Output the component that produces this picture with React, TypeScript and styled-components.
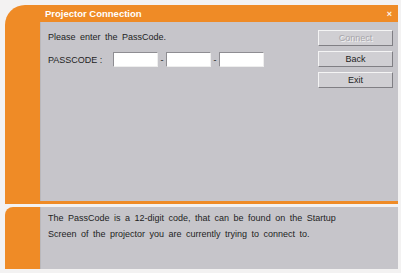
import React from 'react';
import styled, { createGlobalStyle } from 'styled-components';

const ORANGE = '#ef8b26';
const GRAY = '#c6c5ca';

const Global = createGlobalStyle`
    html, body {
        margin: 0;
        padding: 0;
        background: #f3f2f2;
    }
    body {
        font-family: "Liberation Sans", Arial, sans-serif;
        color: #1e1e1e;
    }
`;

const Window = styled.div`
    width: 401px;
    height: 273px;
    box-sizing: border-box;
    padding: 5px 3px 4px 5px;
    display: grid;
    grid-template-rows: 199px 62px;
    row-gap: 3px;
    background: #f3f2f2;
`;

const TopPanel = styled.div`
    display: grid;
    grid-template-columns: 35px 1fr;
    grid-template-rows: 17px 1fr;
    background: ${ORANGE};
    border-top-left-radius: 20px;
    padding-bottom: 3px;
`;

const TitleBar = styled.div`
    grid-column: 2;
    display: flex;
    align-items: center;
    justify-content: space-between;
    padding: 0 6px 0 5px;
    color: #fff;
    font-weight: bold;
    font-size: 9.5px;
`;

const Close = styled.span`
    font-size: 9px;
    font-weight: bold;
    opacity: 0.9;
`;

const Content = styled.div`
    grid-column: 2;
    background: ${GRAY};
    display: grid;
    grid-template-columns: 1fr 75px;
    padding: 8px 5px 0 7px;
    border-left: 1px solid #b9b8bc;
`;

const Form = styled.div`
    display: flex;
    flex-direction: column;
    gap: 8px;
    font-size: 9px;
    word-spacing: 2px;
`;

const Line = styled.div`
    height: 14px;
    line-height: 14px;
`;

const CodeRow = styled.div`
    display: flex;
    align-items: center;
    height: 15px;
    word-spacing: 0;
`;

const Label = styled.span`
    width: 65px;
`;

const Dash = styled.span`
    width: 8px;
    text-align: center;
`;

const CodeInput = styled.input`
    width: 45px;
    height: 15px;
    box-sizing: border-box;
    margin: 0;
    padding: 0 2px;
    background: #fff;
    border: 1px solid;
    border-color: #8e8d92 #eeeeee #eeeeee #8e8d92;
    outline: none;
    font-size: 9px;
`;

const Buttons = styled.div`
    display: flex;
    flex-direction: column;
    gap: 5px;
`;

const Button = styled.button<{ disabled?: boolean }>`
    height: 16px;
    margin: 0;
    padding: 0;
    box-sizing: border-box;
    background: #d0cfd3;
    border: 1px solid;
    border-color: #f4f4f4 #807f84 #807f84 #f4f4f4;
    font-family: "Liberation Sans", Arial, sans-serif;
    font-size: 9px;
    color: ${p => (p.disabled ? '#a6a5aa' : '#1e1e1e')};
    text-shadow: ${p => (p.disabled ? '1px 1px 0 #f2f2f2' : 'none')};
`;

const BottomPanel = styled.div`
    display: grid;
    grid-template-columns: 35px 1fr;
    background: ${ORANGE};
    border-top-left-radius: 8px;
`;

const Hint = styled.div`
    background: ${GRAY};
    padding: 3px 0 0 7px;
    font-size: 9px;
    line-height: 16px;
    word-spacing: 2px;
    border-left: 1px solid #b9b8bc;
`;

const App = () => {
    return (
        <>
            <Global />
            <Window>
                <TopPanel>
                    <TitleBar>
                        <span>Projector Connection</span>
                        <Close>×</Close>
                    </TitleBar>
                    <Content>
                        <Form>
                            <Line>Please enter the PassCode.</Line>
                            <CodeRow>
                                <Label>PASSCODE :</Label>
                                <CodeInput />
                                <Dash>-</Dash>
                                <CodeInput />
                                <Dash>-</Dash>
                                <CodeInput />
                            </CodeRow>
                        </Form>
                        <Buttons>
                            <Button disabled>Connect</Button>
                            <Button>Back</Button>
                            <Button>Exit</Button>
                        </Buttons>
                    </Content>
                </TopPanel>
                <BottomPanel>
                    <div />
                    <Hint>
                        The PassCode is a 12-digit code, that can be found on the Startup
                        <br />
                        Screen of the projector you are currently trying to connect to.
                    </Hint>
                </BottomPanel>
            </Window>
        </>
    );
};

export default App;
